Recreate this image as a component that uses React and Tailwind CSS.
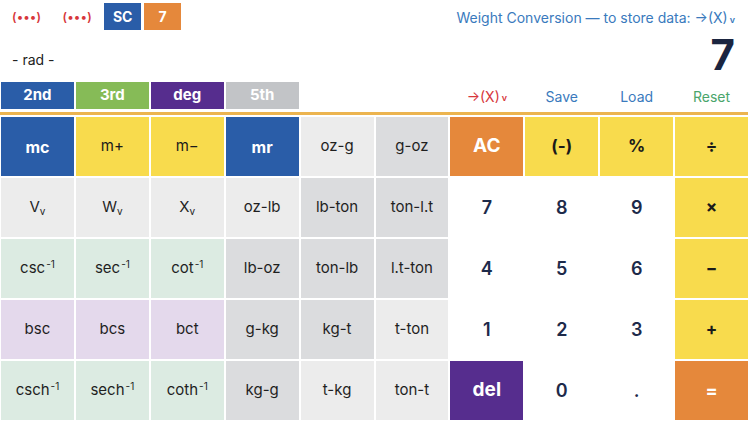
import React from "react";

const BLUE = "bg-[#2a5da8] text-white font-bold text-[16px]";
const YEL = "bg-[#f8db4d] text-[#1a1a1a] text-[15px]";
const YELB = "bg-[#f8db4d] text-[#1a1a1a] font-bold text-[17px]";
const ORG = "bg-[#e5883b] text-white font-bold text-[19px]";
const LG = "bg-[#ececec] text-[#1f1f1f] text-[15px]";
const DG = "bg-[#dbdcde] text-[#1f1f1f] text-[15px]";
const GR = "bg-[#dcebe2] text-[#1f1f1f] text-[15px]";
const LV = "bg-[#e4d9ec] text-[#1f1f1f] text-[15px]";
const NUM = "bg-white text-[#1d2a4a] font-semibold text-[18px]";
const PUR = "bg-[#562d8e] text-white font-bold text-[19px]";

const Sub = ({ b }) => (
  <span>
    {b}
    <sub className="text-[10px]">v</sub>
  </span>
);
const Inv = ({ b }) => (
  <span>
    {b}
    <sup className="text-[10px] ml-[1px]">-1</sup>
  </span>
);

const cells = [
  ["mc", BLUE], ["m+", YEL], ["m−", YEL], ["mr", BLUE], ["oz-g", LG], ["g-oz", DG], ["AC", ORG], ["(-)", YELB], ["%", YELB], ["÷", YELB],
  [<Sub b="V" />, LG], [<Sub b="W" />, LG], [<Sub b="X" />, LG], ["oz-lb", LG], ["lb-ton", DG], ["ton-l.t", DG], ["7", NUM], ["8", NUM], ["9", NUM], ["×", YELB],
  [<Inv b="csc" />, GR], [<Inv b="sec" />, GR], [<Inv b="cot" />, GR], ["lb-oz", DG], ["ton-lb", DG], ["l.t-ton", DG], ["4", NUM], ["5", NUM], ["6", NUM], ["−", YELB],
  ["bsc", LV], ["bcs", LV], ["bct", LV], ["g-kg", DG], ["kg-t", DG], ["t-ton", LG], ["1", NUM], ["2", NUM], ["3", NUM], ["+", YELB],
  [<Inv b="csch" />, GR], [<Inv b="sech" />, GR], [<Inv b="coth" />, GR], ["kg-g", DG], ["t-kg", LG], ["ton-t", LG], ["del", PUR], ["0", NUM], [".", NUM], ["=", "bg-[#e5883b] text-white font-bold text-[18px]"],
];

export default function App() {
  return (
    <div
      className="w-[750px] h-[422px] bg-white overflow-hidden flex flex-col"
      style={{ fontFamily: "Inter, 'Liberation Sans', sans-serif" }}
    >
      {/* header */}
      <div className="h-[82px] flex justify-between">
        <div className="flex flex-col pl-[12px]">
          <div className="flex items-center h-[27px] mt-[3px]">
            <span className="text-[#d7363b] text-[12px] font-semibold tracking-[0.5px]">(•••)</span>
            <span className="text-[#d7363b] text-[12px] font-semibold tracking-[0.5px] ml-[21px]">(•••)</span>
            <div className="ml-[12px] w-[37px] h-[27px] bg-[#2a5da8] text-white font-bold text-[14px] flex items-center justify-center">SC</div>
            <div className="ml-[3px] w-[37px] h-[27px] bg-[#e5883b] text-white font-bold text-[14px] flex items-center justify-center">7</div>
          </div>
          <div className="mt-[19px] text-[14px] text-[#222]">- rad -</div>
        </div>
        <div className="flex flex-col items-end pr-[15px]">
          <div className="mt-[7px] text-[14px] text-[#3a7abd]">
            Weight Conversion — to store data: →(X)<span className="text-[9px] font-semibold ml-[2px]">v</span>
          </div>
          <div className="mt-[5px] text-[42px] leading-[44px] font-bold text-[#1b2540]">7</div>
        </div>
      </div>

      {/* tabs row */}
      <div className="grid grid-cols-10 gap-x-[2px] ml-[1px] w-[747px] h-[27px]">
        <div className="bg-[#2a5da8] text-white font-bold text-[15px] flex items-center justify-center">2nd</div>
        <div className="bg-[#86bb57] text-white font-bold text-[15px] flex items-center justify-center">3rd</div>
        <div className="bg-[#562d8e] text-white font-bold text-[15px] flex items-center justify-center">deg</div>
        <div className="bg-[#c2c4c7] text-white font-bold text-[15px] flex items-center justify-center">5th</div>
        <div />
        <div />
        <div className="text-[#d7363b] text-[14px] flex items-center justify-center pt-[1px]">
          →(X)<span className="text-[9px] font-semibold ml-[2px] mt-[4px]">v</span>
        </div>
        <div className="text-[#3a7abd] text-[14px] flex items-center justify-center pt-[1px]">Save</div>
        <div className="text-[#3a7abd] text-[14px] flex items-center justify-center pt-[1px]">Load</div>
        <div className="text-[#4aa56b] text-[14px] flex items-center justify-center pt-[1px]">Reset</div>
      </div>

      <div className="mt-[3px] h-[3px] w-[748px] bg-[#ecb44f]" />

      {/* keypad */}
      <div className="mt-[2px] grid grid-cols-10 grid-rows-5 gap-[2px] ml-[1px] w-[747px] h-[303px]">
        {cells.map(([label, cls], i) => (
          <div key={i} className={`flex items-center justify-center ${cls}`}>
            {label}
          </div>
        ))}
      </div>
    </div>
  );
}
